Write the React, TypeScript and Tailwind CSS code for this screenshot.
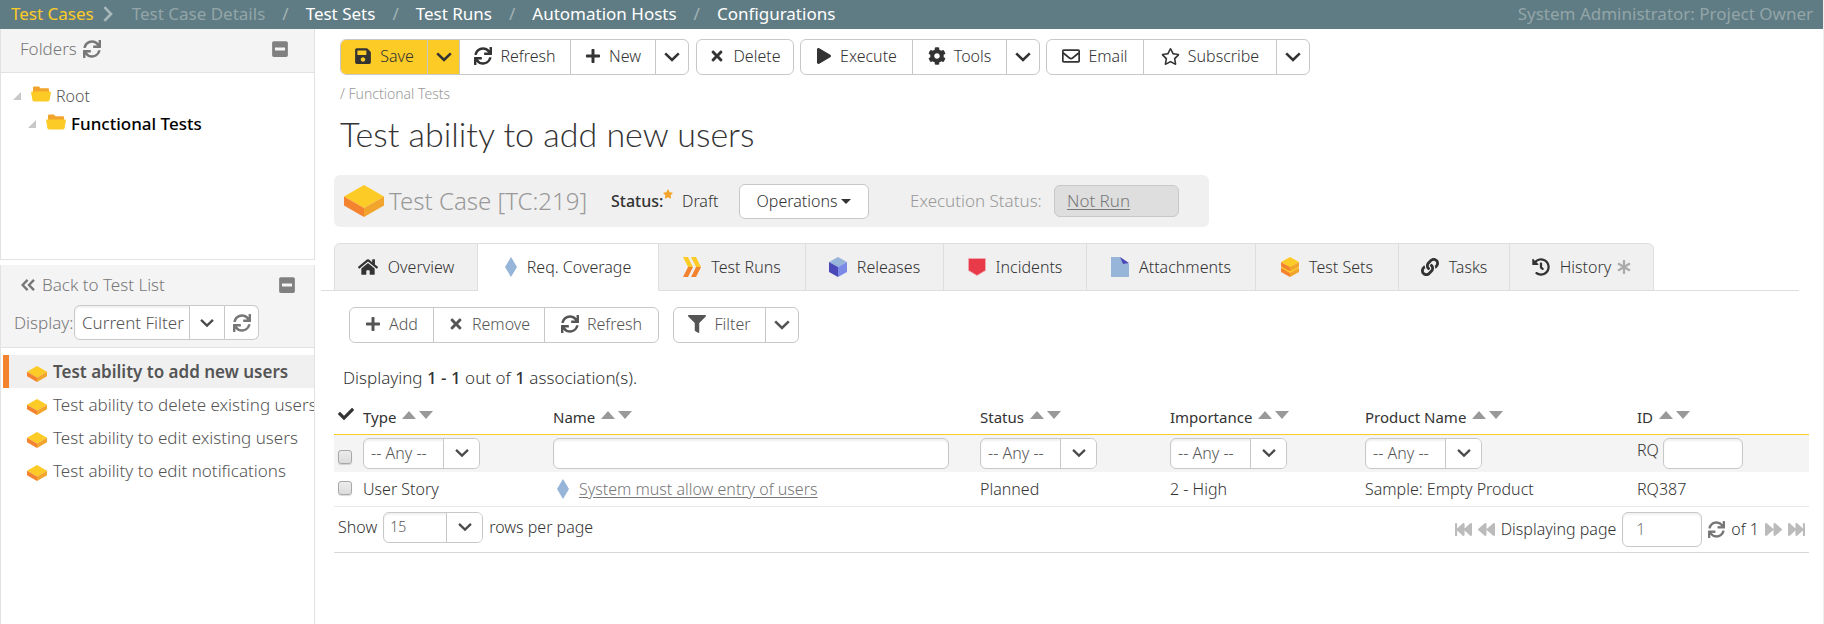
import React from "react";
import {
  FaSync, FaSave, FaPlus, FaTimes, FaPlay, FaCog, FaRegEnvelope, FaRegStar, FaStar, FaHome, FaLink,
  FaHistory, FaAsterisk, FaFilter, FaCheck, FaMinusSquare, FaFastBackward, FaBackward, FaForward, FaFastForward,
} from "react-icons/fa";

type Kids = { children: React.ReactNode };

function Chevron({ className = "size-4" }: { className?: string }) {
  return (
    <svg viewBox="0 0 16 16" className={className} fill="none" stroke="currentColor" strokeWidth="2.6" aria-hidden="true">
      <path d="M1.2 4.4 L8 11 L14.8 4.4" />
    </svg>
  );
}

function Brick({ className }: { className: string }) {
  return (
    <svg viewBox="0 0 40 32" className={className} aria-hidden="true">
      <path d="M20 0 L40 11.5 L20 23 L0 11.5Z" fill="#fdcb26" />
      <path d="M0 11.5 L20 23 V32 L0 20.5Z" fill="#f4832f" />
      <path d="M40 11.5 L20 23 V32 L40 20.5Z" fill="#f2a52c" />
    </svg>
  );
}

function FolderIcon() {
  return (
    <svg viewBox="0 0 20 15" className="h-4 w-5 shrink-0" aria-hidden="true">
      <path d="M2 1 Q2 0 3 0 H8 L9.5 1.8 H17 Q18 1.8 18 3 V7 H2Z" fill="#f2a52c" />
      <path d="M0.8 5 H19.2 Q20 5 19.9 6 L18.6 13.6 Q18.4 15 17 15 H3 Q1.6 15 1.4 13.6 L0.1 6 Q0 5 0.8 5Z" fill="#fdcb26" />
    </svg>
  );
}

function TreeCorner() {
  return (
    <svg viewBox="0 0 8 8" className="size-2 shrink-0" aria-hidden="true">
      <path d="M8 0 V8 H0Z" fill="#c8c8c8" />
    </svg>
  );
}

function Diamond() {
  return (
    <svg viewBox="0 0 12 20" className="h-5 w-3 shrink-0" aria-hidden="true">
      <path d="M6 0 L12 10 L6 20 L0 10Z" fill="#97b4d9" />
    </svg>
  );
}

function RunsIcon() {
  return (
    <svg viewBox="0 0 18 20" className="h-5 w-[18px]" aria-hidden="true">
      <path d="M0 0 H5 L10 10 H5Z M8 0 H13 L18 10 H13Z" fill="#fdcb26" />
      <path d="M0 20 H5 L10 10 H5Z M8 20 H13 L18 10 H13Z" fill="#f4832f" />
    </svg>
  );
}

function CubeIcon() {
  return (
    <svg viewBox="0 0 18 20" className="h-5 w-[18px]" aria-hidden="true">
      <path d="M9 0 L18 5 L9 10 L0 5Z" fill="#97b4d9" />
      <path d="M0 5 L9 10 V20 L0 15Z" fill="#4b49b8" />
      <path d="M18 5 L9 10 V20 L18 15Z" fill="#7b8ae6" />
    </svg>
  );
}

function ShieldIcon() {
  return (
    <svg viewBox="0 0 18 18" className="size-[18px]" aria-hidden="true">
      <path d="M0.5 0.5 H17.5 V12.5 L9 17.5 L0.5 12.5Z" fill="#e83a48" stroke="#f0aab0" strokeWidth="0.8" />
    </svg>
  );
}

function FileIcon() {
  return (
    <svg viewBox="0 0 18 20" className="h-5 w-[18px]" aria-hidden="true">
      <path d="M0 0 H9 L18 7 V20 H0Z" fill="#97b4d9" />
      <path d="M9 0 L18 6 L12 7Z" fill="#4b49b8" />
    </svg>
  );
}

function StackIcon() {
  return (
    <svg viewBox="0 0 18 20" className="h-5 w-[18px]" aria-hidden="true">
      <path d="M0 10.5 L9 15.5 V20 L0 15Z" fill="#f4832f" />
      <path d="M18 10.5 L9 15.5 V20 L18 15Z" fill="#f2a52c" />
      <path d="M9 6 L18 10.8 L9 16 L0 10.8Z" fill="#fdcb26" />
      <path d="M0 5 L9 10 V14.2 L0 9.4Z" fill="#f4832f" />
      <path d="M18 5 L9 10 V14.2 L18 9.4Z" fill="#f2a52c" />
      <path d="M9 0 L18 5 L9 10 L0 5Z" fill="#fdcb26" />
    </svg>
  );
}

function Group({ children }: Kids) {
  return <div className="flex h-9 divide-x divide-[#c8c8c8] overflow-hidden rounded-md border border-[#c8c8c8] bg-white">{children}</div>;
}

function Tool({ icon, children, className }: Kids & { icon: React.ReactNode; className: string }) {
  return (
    <button type="button" className={`flex items-center justify-center gap-2 whitespace-nowrap pb-[2px] ${className}`}>
      {icon}
      <span>{children}</span>
    </button>
  );
}

function More({ label, className = "w-8" }: { label: string; className?: string }) {
  return (
    <button type="button" aria-label={label} className={`flex items-center justify-center ${className}`}>
      <Chevron />
    </button>
  );
}

function Picker({ label, value, className, textClass, arrowClass }: { label: string; value: string; className: string; textClass: string; arrowClass: string }) {
  return (
    <div className={`relative flex overflow-hidden border-[#c8c8c8] bg-white shadow-[inset_0_2px_2px_rgba(0,0,0,0.06)] ${className}`}>
      <select aria-label={label} defaultValue={value} className={`h-full w-full appearance-none bg-transparent text-[#555] ${textClass}`}>
        <option>{value}</option>
      </select>
      <span className={`pointer-events-none absolute inset-y-0 right-0 flex items-center justify-center border-l border-[#c8c8c8] bg-white text-[#4a4a4a] ${arrowClass}`}>
        <Chevron className="size-[14px]" />
      </span>
    </div>
  );
}

function AnyPicker({ label }: { label: string }) {
  return <Picker label={label} value="-- Any --" className="h-[31px] w-[117px] rounded-md border" textClass="pl-[7px] text-base" arrowClass="w-9" />;
}

function Sort({ children }: Kids) {
  return (
    <th scope="col" className="px-[3px] pt-[2px] text-left font-normal">
      <div className="flex items-center gap-[6px]">
        {children}
        <span className="flex gap-[3px] pb-1">
          <button type="button" aria-label="Sort ascending">
            <svg viewBox="0 0 14 8" className="h-2 w-[14px]"><path d="M7 0 L14 8 H0Z" fill="#999" /></svg>
          </button>
          <button type="button" aria-label="Sort descending">
            <svg viewBox="0 0 14 8" className="h-2 w-[14px]"><path d="M0 0 H14 L7 8Z" fill="#999" /></svg>
          </button>
        </span>
      </div>
    </th>
  );
}

function Check({ label }: { label: string }) {
  return (
    <input
      type="checkbox"
      aria-label={label}
      className="block size-[14px] appearance-none rounded-[3px] border border-[#a8a8a8] bg-gradient-to-b from-[#ececec] to-[#dcdcdc] shadow-[0_1px_1px_rgba(0,0,0,0.15)]"
    />
  );
}

function Tab({ icon, children, className, active }: Kids & { icon: React.ReactNode; className: string; active?: boolean }) {
  return (
    <button
      type="button"
      role="tab"
      aria-selected={!!active}
      className={`flex items-center justify-center gap-[10px] whitespace-nowrap border-y border-r border-[#dedede] ${active ? "border-b-white bg-white" : "bg-[#f0f0f0]"} ${className}`}
    >
      {icon}
      <span className="flex items-center gap-[6px]">{children}</span>
    </button>
  );
}

const tests = ["Test ability to add new users", "Test ability to delete existing users", "Test ability to edit existing users", "Test ability to edit notifications"];

function Header() {
  const links = ["Test Sets", "Test Runs", "Automation Hosts", "Configurations"];
  return (
    <header className="flex h-[29px] items-center justify-between bg-[#5f7c84] pr-[10px] pl-[11px] pb-[2px] text-[17px]">
      <nav className="flex items-center whitespace-nowrap">
        <a href="#cases" className="text-[#fdcb26]">Test Cases</a>
        <Chevron className="mr-4 ml-[6px] size-4 -rotate-90 text-[#a9b8ba]" />
        <a href="#details" className="text-[#93a5a8]">Test Case Details</a>
        {links.map((l) => (
          <React.Fragment key={l}>
            <span className="px-[17px] text-[#a3b3b5]">/</span>
            <a href="#section" className="text-white">{l}</a>
          </React.Fragment>
        ))}
      </nav>
      <span className="text-[#93a5a8]">System Administrator: Project Owner</span>
    </header>
  );
}

function Sidebar() {
  return (
    <aside className="flex w-[315px] shrink-0 flex-col font-light text-[#555]">
      <section className="flex h-[231px] flex-col border-x border-b border-[#e2e2e2]">
        <div className="flex h-11 items-center border-b border-[#e2e2e2] bg-[#f4f4f4] pr-[25px] pb-1 pl-[19px] text-[17px] text-[#777]">
          Folders
          <button type="button" aria-label="Refresh folders" className="ml-[6px]"><FaSync className="size-[18px]" /></button>
          <button type="button" aria-label="Collapse folders" className="ml-auto text-[#808080]"><FaMinusSquare className="size-[18px]" /></button>
        </div>
        <ul className="pt-[9px]">
          <li className="flex h-7 items-center pl-3"><TreeCorner /><span className="mr-[5px] ml-[10px] pb-1"><FolderIcon /></span>Root</li>
          <li className="flex h-7 items-center pl-[27px] text-[17px] font-medium text-black"><TreeCorner /><span className="mr-[5px] ml-[10px] pb-1"><FolderIcon /></span>Functional Tests</li>
        </ul>
      </section>
      <section className="mt-[5px] flex flex-1 flex-col border-x border-[#e2e2e2] text-[17px]">
        <div className="border-b border-[#e2e2e2] bg-[#f4f4f4] pt-[5px] pb-[7px] text-[#777]">
          <div className="flex h-[30px] items-center pr-[18px] pl-5">
            <a href="#back" className="flex items-center gap-[7px]">
              <svg viewBox="0 0 14 12" className="h-3 w-[14px]" fill="none" stroke="currentColor" strokeWidth="2.4" aria-hidden="true">
                <path d="M6.6 0.8 L1.6 6 L6.6 11.2 M13 0.8 L8 6 L13 11.2" />
              </svg>
              Back to Test List
            </a>
            <button type="button" aria-label="Collapse list" className="ml-auto text-[#808080]"><FaMinusSquare className="size-[18px]" /></button>
          </div>
          <div className="mt-[5px] flex items-center pl-[13px]">
            <span className="w-[60px] whitespace-nowrap">Display:</span>
            <Picker label="Display" value="Current Filter" className="h-[35px] w-[151px] rounded-l-md border" textClass="pl-[7px] text-[17px]" arrowClass="w-[35px]" />
            <button type="button" aria-label="Refresh list" className="flex h-[35px] w-[34px] items-center justify-center rounded-r-md border-y border-r border-[#c8c8c8] bg-white"><FaSync className="size-[18px]" /></button>
          </div>
        </div>
        <ul className="mt-[7px] overflow-hidden pl-[2px]">
          {tests.map((t, i) => (
            <li key={t} className={`flex h-[33px] items-center gap-[6px] whitespace-nowrap border-l-[6px] pl-[18px] ${i === 0 ? "border-[#f4832f] bg-[#f0f0f0] font-semibold" : "border-transparent"}`}>
              <span className="shrink-0 pt-1"><Brick className="h-4 w-5" /></span>
              {t}
            </li>
          ))}
        </ul>
      </section>
    </aside>
  );
}

function Toolbar() {
  return (
    <div className="flex flex-wrap pl-[19px]">
      <Group>
        <Tool className="w-[87px] bg-[#fdcb26]" icon={<FaSave className="size-[18px]" />}>Save</Tool>
        <More label="Save options" className="w-8 bg-[#fdcb26]" />
        <Tool className="w-[111px]" icon={<FaSync className="size-[18px]" />}>Refresh</Tool>
        <Tool className="w-[85px]" icon={<FaPlus className="size-4" />}>New</Tool>
        <More label="New options" />
      </Group>
      <div className="ml-[7px]">
        <Group><Tool className="w-[96px]" icon={<FaTimes className="size-4" />}>Delete</Tool></Group>
      </div>
      <div className="ml-[6px]">
        <Group>
          <Tool className="w-[112px]" icon={<FaPlay className="size-4" />}>Execute</Tool>
          <Tool className="w-[94px]" icon={<FaCog className="size-[18px]" />}>Tools</Tool>
          <More label="Tool options" />
        </Group>
      </div>
      <div className="ml-[6px]">
        <Group>
          <Tool className="w-[97px]" icon={<FaRegEnvelope className="size-[18px]" />}>Email</Tool>
          <Tool className="w-[133px]" icon={<FaRegStar className="size-[19px]" />}>Subscribe</Tool>
          <More label="Subscribe options" />
        </Group>
      </div>
    </div>
  );
}

function Summary() {
  return (
    <div className="ml-[13px] flex h-[52px] w-[875px] max-w-full items-center whitespace-nowrap rounded-md bg-[#f0f0f0] pl-[10px]">
      <Brick className="h-8 w-10" />
      <span className="ml-[5px] w-[222px] text-2xl text-[#999]">Test Case [TC:219]</span>
      <span className="flex w-[71px] font-medium">
        Status:<FaStar className="size-[10px] text-[#f2a52c]" />
      </span>
      <span className="w-[57px]">Draft</span>
      <button type="button" className="flex h-[35px] w-[130px] items-center justify-center gap-1 rounded-md border border-[#c8c8c8] bg-white">
        Operations
        <svg viewBox="0 0 10 5" className="h-[5px] w-[10px]" aria-hidden="true"><path d="M0 0 H10 L5 5Z" fill="#333" /></svg>
      </button>
      <span className="ml-[41px] w-[144px] text-[17px] text-[#999]">Execution Status:</span>
      <a href="#run" className="flex h-8 w-[125px] items-center rounded-md border border-[#c8c8c8] bg-[#dedede] pl-3 text-[17px] text-[#777] underline underline-offset-2">Not Run</a>
    </div>
  );
}

function Tabs() {
  return (
    <div className="mr-[24px] border-b border-[#dedede] pl-[13px]">
      <div role="tablist" className="-mb-px flex h-12">
        <Tab className="w-[144px] rounded-tl-md border-l" icon={<FaHome className="size-5" />}>Overview</Tab>
        <Tab className="w-[181px]" active icon={<Diamond />}>Req. Coverage</Tab>
        <Tab className="w-[147px]" icon={<RunsIcon />}>Test Runs</Tab>
        <Tab className="w-[138px]" icon={<CubeIcon />}>Releases</Tab>
        <Tab className="w-[143px]" icon={<ShieldIcon />}>Incidents</Tab>
        <Tab className="w-[169px]" icon={<FileIcon />}>Attachments</Tab>
        <Tab className="w-[143px]" icon={<StackIcon />}>Test Sets</Tab>
        <Tab className="w-[111px]" icon={<FaLink className="size-[18px]" />}>Tasks</Tab>
        <Tab className="w-[144px] rounded-tr-md" icon={<FaHistory className="size-[18px]" />}>History<FaAsterisk className="size-[14px] text-[#aaa]" /></Tab>
      </div>
    </div>
  );
}

function Grid() {
  return (
    <table className="w-full table-fixed border-collapse text-base">
      <colgroup>
        <col className="w-[26px]" />
        <col className="w-[190px]" />
        <col />
        <col className="w-[190px]" />
        <col className="w-[195px]" />
        <col className="w-[272px]" />
        <col className="w-[175px]" />
      </colgroup>
      <thead>
        <tr className="h-9 border-b border-[#fdcb26] text-[15px]">
          <th scope="col" className="pb-1 pl-1"><FaCheck className="size-4" aria-label="Select" /></th>
          <Sort>Type</Sort>
          <Sort>Name</Sort>
          <Sort>Status</Sort>
          <Sort>Importance</Sort>
          <Sort>Product Name</Sort>
          <Sort>ID</Sort>
        </tr>
      </thead>
      <tbody>
        <tr className="h-[38px] bg-[#f4f4f4]">
          <td className="pt-2 pl-1"><Check label="Select all" /></td>
          <td className="px-[3px]"><AnyPicker label="Type filter" /></td>
          <td className="px-[3px]"><input aria-label="Name filter" className="block h-[31px] w-[94%] rounded-md border border-[#c8c8c8] bg-white px-2 shadow-[inset_0_2px_2px_rgba(0,0,0,0.06)]" /></td>
          <td className="px-[3px]"><AnyPicker label="Status filter" /></td>
          <td className="px-[3px]"><AnyPicker label="Importance filter" /></td>
          <td className="px-[3px]"><AnyPicker label="Product filter" /></td>
          <td className="px-[3px]">
            <label className="flex">
              <span className="w-[26px]">RQ</span>
              <input className="h-[31px] w-20 rounded-md border border-[#c8c8c8] bg-white px-2 shadow-[inset_0_2px_2px_rgba(0,0,0,0.06)]" />
            </label>
          </td>
        </tr>
        <tr className="h-[34px] border-b border-[#e8e8e8]">
          <td className="pb-[2px] pl-1"><Check label="Select row" /></td>
          <td className="px-[3px]">User Story</td>
          <td className="pl-[7px]">
            <span className="flex items-center gap-[10px]"><Diamond /><a href="#rq387" className="text-[#777] underline underline-offset-2">System must allow entry of users</a></span>
          </td>
          <td className="px-[3px]">Planned</td>
          <td className="px-[3px]">2 - High</td>
          <td className="px-[3px]">Sample: Empty Product</td>
          <td className="px-[3px]">RQ387</td>
        </tr>
      </tbody>
    </table>
  );
}

function Pager() {
  return (
    <div className="flex h-[46px] items-start justify-between border-b border-[#d8d8d8] pt-[5px] pr-1 pl-1 text-base">
      <div className="flex items-center gap-[6px]">
        Show
        <Picker label="Rows per page" value="15" className="h-[31px] w-[100px] rounded-md border" textClass="pl-[6px] text-sm" arrowClass="w-9" />
        rows per page
      </div>
      <div className="flex items-center gap-[6px]">
        <button type="button" aria-label="First page" className="text-[#bbb]"><FaFastBackward className="size-[17px]" /></button>
        <button type="button" aria-label="Previous page" className="text-[#bbb]"><FaBackward className="size-[17px]" /></button>
        <label className="flex items-center gap-[6px]">
          Displaying page
          <input defaultValue="1" className="h-[35px] w-20 rounded-md border border-[#c8c8c8] pl-[13px] text-[#777] shadow-[inset_0_2px_2px_rgba(0,0,0,0.06)]" />
        </label>
        <button type="button" aria-label="Reload page" className="text-[#777]"><FaSync className="size-[17px]" /></button>
        of 1
        <button type="button" aria-label="Next page" className="text-[#bbb]"><FaForward className="size-[17px]" /></button>
        <button type="button" aria-label="Last page" className="text-[#bbb]"><FaFastForward className="size-[17px]" /></button>
      </div>
    </div>
  );
}

export default function App() {
  return (
    <div className="flex min-h-screen flex-col border-r border-[#eee] bg-white font-['Noto_Sans',sans-serif] text-base leading-6 text-[#333]">
      <Header />
      <div className="flex flex-1">
        <Sidebar />
        <main className="min-w-0 flex-1 pt-[10px] pl-[6px] font-light">
          <Toolbar />
          <p className="mt-[7px] pl-[19px] text-sm leading-6 text-[#999]">/ Functional Tests</p>
          <h1 className="mt-[6px] mb-[19px] pl-[19px] font-[Lato,sans-serif] text-[34px] leading-[44px] font-light">Test ability to add new users</h1>
          <Summary />
          <div className="mt-4"><Tabs /></div>
          <div className="mt-4 flex gap-[14px] pl-7 text-[#555]">
            <Group>
              <Tool className="w-[84px]" icon={<FaPlus className="size-4" />}>Add</Tool>
              <Tool className="w-[111px]" icon={<FaTimes className="size-4" />}>Remove</Tool>
              <Tool className="w-[113px]" icon={<FaSync className="size-[18px]" />}>Refresh</Tool>
            </Group>
            <Group>
              <Tool className="w-[92px]" icon={<FaFilter className="size-[18px]" />}>Filter</Tool>
              <More label="Filter options" />
            </Group>
          </div>
          <p className="mt-[23px] mb-2 pl-[22px] text-[17px]">
            Displaying <b className="font-medium">1 - 1</b> out of <b className="font-medium">1</b> association(s).
          </p>
          <div className="pr-[14px] pl-[13px]">
            <Grid />
            <Pager />
          </div>
        </main>
      </div>
    </div>
  );
}
